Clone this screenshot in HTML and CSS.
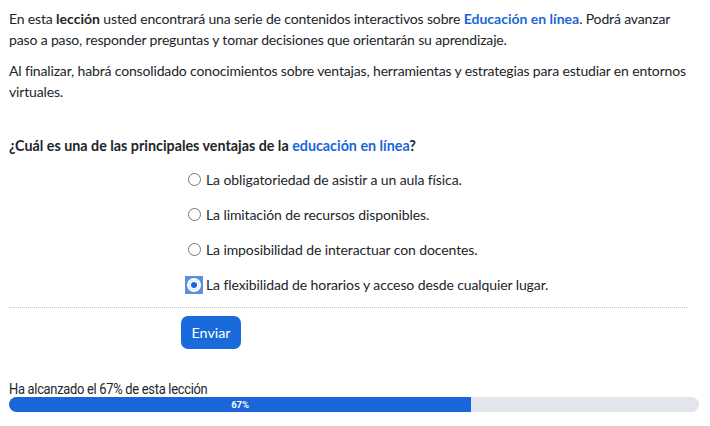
FILE: index.html
```html
<!DOCTYPE html>
<html lang="es">
<head>
<meta charset="utf-8">
<link rel="stylesheet" href="styles.css">
</head>
<body>
<div class="page">
  <p class="intro">En esta <strong>lección</strong> usted encontrará una serie de contenidos interactivos sobre <strong class="hl">Educación en línea</strong>. Podrá avanzar paso a paso, responder preguntas y tomar decisiones que orientarán su aprendizaje.</p>
  <p class="intro">Al finalizar, habrá consolidado conocimientos sobre ventajas, herramientas y estrategias para estudiar en entornos virtuales.</p>

  <h2 class="question">¿Cuál es una de las principales ventajas de la <span class="hl">educación en línea</span>?</h2>

  <ul class="options">
    <li class="option"><span class="radio"></span><span>La obligatoriedad de asistir a un aula física.</span></li>
    <li class="option"><span class="radio"></span><span>La limitación de recursos disponibles.</span></li>
    <li class="option"><span class="radio"></span><span>La imposibilidad de interactuar con docentes.</span></li>
    <li class="option selected"><span class="radio-focus"><span class="radio checked"></span></span><span>La flexibilidad de horarios y acceso desde cualquier lugar.</span></li>
  </ul>

  <div class="divider"></div>
  <div class="actions"><button class="btn">Enviar</button></div>

  <div class="progress-label">Ha alcanzado el 67% de esta lección</div>
  <div class="progress"><div class="progress-fill" style="width:67%">67%</div></div>
</div>
</body>
</html>
```

FILE: styles.css
```css
* { box-sizing: border-box; }
html, body { margin: 0; padding: 0; background: #fff; }
body {
  font-family: "Lato", "Noto Sans", sans-serif;
  font-size: 14px;
  color: #212529;
}
.page { padding: 8px 11px 0 9px; }
.intro { margin: 0 0 10px; line-height: 21px; letter-spacing: -0.15px; }
.intro strong { font-weight: 700; color: #212529; letter-spacing: 0; }
.intro strong.hl, .hl { color: #1a66d9; }
.question {
  margin: 33px 0 0;
  font-size: 14.3px;
  font-weight: 700;
  line-height: 21px;
}
.options { list-style: none; margin: 6px 0 0; padding: 0 0 0 179px; letter-spacing: -0.1px; }
.option { display: flex; align-items: center; gap: 5px; height: 35px; }
.radio {
  width: 13px; height: 13px; border-radius: 50%;
  border: 1px solid #767676; background: #fff; flex: none; margin-left: 0;
}
.radio-focus {
  width: 18px; height: 18px; background: #5b8fe0; flex: none; margin-left: -3px; margin-right: -2px;
  display: flex; align-items: center; justify-content: center;
}
.radio.checked {
  margin: 0; border: 2px solid #fff; background: #1a66d9; width: 14px; height: 14px;
  box-shadow: inset 0 0 0 2px #fff;
}
.divider { margin-top: 5px; border-top: 1px dotted #c5c9d2; margin-right: 12px; }
.actions { padding: 8px 0 0 172px; }
.btn {
  font: inherit; font-size: 14.3px; color: #fff; background: #1a6adb;
  border: 0; border-radius: 7px; height: 33px; padding: 0 10.5px;
}
.progress-label { margin-top: 32px; font-size: 14px; line-height: 16px; letter-spacing: -0.3px; font-family: "Roboto", sans-serif; transform: scaleX(0.92); transform-origin: left; }
.progress { margin-top: 0; height: 15px; background: #e2e5ec; border-radius: 8px; overflow: hidden; }
.progress-fill {
  height: 100%; background: #1a66d9; color: #fff; font-size: 9.5px; font-weight: 700;
  text-align: center; line-height: 15px; font-family: "Roboto", sans-serif;
}
```
